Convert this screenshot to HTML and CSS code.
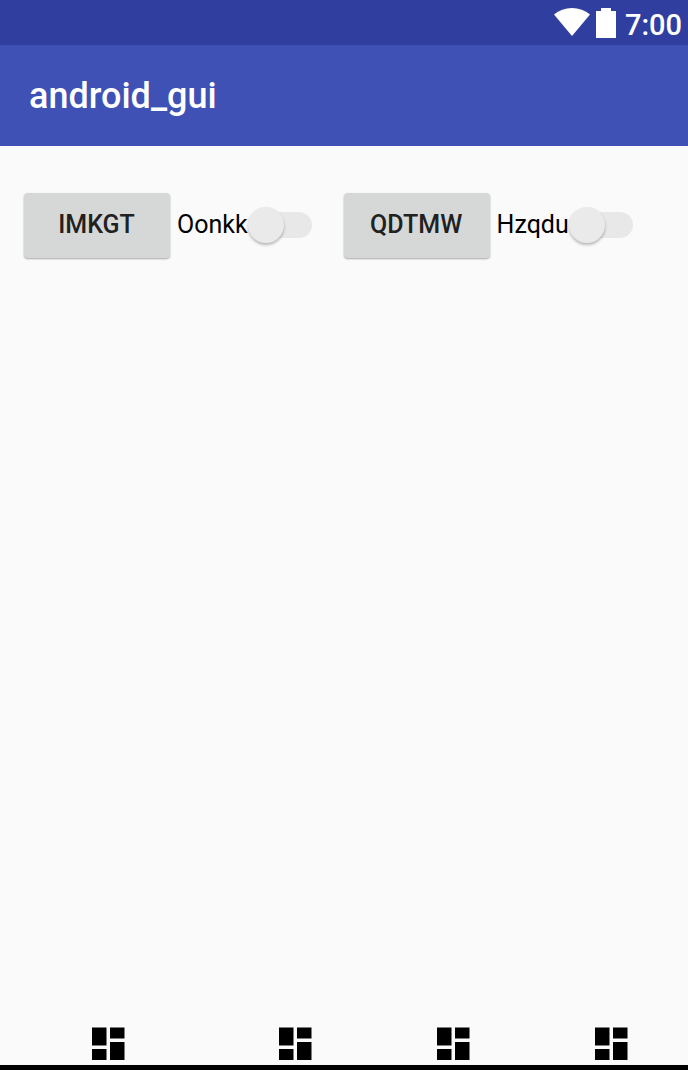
FILE: index.html
```html
<!DOCTYPE html>
<html lang="en">
<head>
<meta charset="utf-8">
<meta name="viewport" content="width=device-width, initial-scale=1">
<title>android_gui</title>
<link rel="stylesheet" href="styles.css">
</head>
<body>
<svg class="sprite" aria-hidden="true">
  <symbol id="dashboard" viewBox="0 0 33 33">
    <path d="M0 .6h14.500v18H0zM18 .6h14.500v11H18zM0 22h14.500v11H0zM18 15h14.500v18H18z"/>
  </symbol>
</svg>
<div class="status-bar">
  <svg class="wifi" viewBox="0 0 36 28" role="img" aria-label="Wi-Fi"><path d="M0 6.500C5 2.300 11 0 18 0s13 2.300 18 6.500L18 28z"/></svg>
  <svg class="battery" viewBox="0 0 20 30" role="img" aria-label="Battery"><path d="M0 3h5V0h10v3h5v27H0z"/></svg>
  <span class="clock">7:00</span>
</div>
<header class="app-bar"><h1 class="title">android_gui</h1></header>
<main class="content">
  <div class="group">
    <button class="button" type="button">IMKGT</button>
    <label class="switch">Oonkk<input class="toggle" type="checkbox" role="switch"></label>
  </div>
  <div class="group">
    <button class="button" type="button">QDTMW</button>
    <label class="switch">Hzqdu<input class="toggle" type="checkbox" role="switch"></label>
  </div>
</main>
<nav class="tabs">
  <button class="tab" type="button" aria-label="Dashboard 1"><svg class="icon"><use href="#dashboard"/></svg></button>
  <button class="tab" type="button" aria-label="Dashboard 2"><svg class="icon"><use href="#dashboard"/></svg></button>
  <button class="tab" type="button" aria-label="Dashboard 3"><svg class="icon"><use href="#dashboard"/></svg></button>
  <button class="tab" type="button" aria-label="Dashboard 4"><svg class="icon"><use href="#dashboard"/></svg></button>
</nav>
</body>
</html>
```
FILE: styles.css
```css
* {
  box-sizing: border-box;
}

body {
  margin: 0;
  min-height: 100vh;
  display: flex;
  flex-direction: column;
  background: #fafafa;
  color: #000;
  font-family: Roboto, sans-serif;
  font-size: 25px;
}

.sprite {
  position: absolute;
  width: 0;
  height: 0;
}

.status-bar {
  display: flex;
  justify-content: flex-end;
  align-items: flex-start;
  height: 45px;
  padding: 8px 6px 0 0;
  background: #303f9f;
  color: #fff;
}

.wifi {
  width: 36px;
  height: 28px;
  margin-right: 6px;
  fill: #fff;
}

.battery {
  width: 20px;
  height: 30px;
  margin-right: 9px;
  fill: #fff;
}

.clock {
  font-size: 29px;
  font-weight: 500;
  line-height: 34px;
}

.app-bar {
  display: flex;
  align-items: center;
  height: 101px;
  padding: 0 29px;
  background: #3f51b5;
  color: #fff;
}

.title {
  margin: 0;
  font-size: 36px;
  font-weight: 500;
}

.content {
  flex: 1;
  display: flex;
  flex-wrap: wrap;
  align-content: flex-start;
  gap: 32px;
  padding: 47px 24px;
}

.group {
  display: flex;
  align-items: center;
  gap: 7px;
}

.button {
  width: 146px;
  height: 65px;
  padding: 0 1px 2px 0;
  border: 0;
  border-radius: 4px;
  background: #d6d8d7;
  color: #212121;
  font: 500 25px Roboto, sans-serif;
  box-shadow: 0 1px 2px #0005;
}

.switch {
  display: flex;
  align-items: center;
  padding-bottom: 2px;
  line-height: 36px;
}

.toggle {
  appearance: none;
  position: relative;
  width: 64px;
  height: 36px;
  margin: 0;
}

.toggle::before {
  content: "";
  position: absolute;
  inset: 5px 0 5px 10px;
  border-radius: 13px;
  background: #e8e8e8;
}

.toggle::after {
  content: "";
  position: absolute;
  top: 0;
  left: 0;
  width: 36px;
  height: 36px;
  border-radius: 50%;
  background: #eaeaea;
  box-shadow: 0 2px 3px #0004;
}

.toggle:checked::after {
  left: auto;
  right: 0;
}

.tabs {
  display: grid;
  grid-template-columns: 187fr 158fr 158fr 93fr;
  padding: 0 0 5px 92px;
  border-bottom: 5px solid #000;
}

.tab {
  display: flex;
  padding: 0;
  border: 0;
  background: none;
}

.icon {
  width: 33px;
  height: 33px;
}
```
